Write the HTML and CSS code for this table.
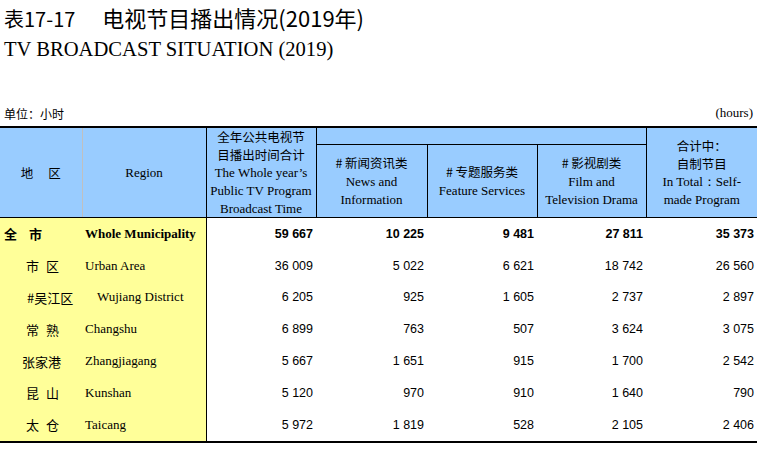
FILE: index.html
```html
<!DOCTYPE html>
<html lang="zh">
<head>
<meta charset="utf-8">
<title>电视节目播出情况</title>
<link rel="stylesheet" href="styles.css">
</head>
<body>
<div class="page">
  <h1 class="title-cn"><span>表17-17</span><span class="title-gap">电视节目播出情况(2019年)</span></h1>
  <h2 class="title-en">TV BROADCAST SITUATION (2019)</h2>
  <div class="unit-row">
    <span class="unit-cn">单位：小时</span>
    <span class="unit-en">(hours)</span>
  </div>
  <table class="stats">
    <colgroup>
      <col class="c1"><col class="c2"><col class="c3"><col class="c4"><col class="c5"><col class="c6"><col class="c7">
    </colgroup>
    <thead>
      <tr class="ha">
        <th rowspan="2" class="h-area"><span class="cn">地</span><span class="cn gap15">区</span></th>
        <th rowspan="2" class="h-region en">Region</th>
        <th rowspan="2" class="h-col"><span class="cn">全年公共电视节<br>目播出时间合计</span><br><span class="en">The Whole year’s<br>Public TV Program<br>Broadcast Time</span></th>
        <th colspan="3" class="h-group"></th>
        <th rowspan="2" class="h-col h-last"><span class="cn">合计中：<br>自制节目</span><br><span class="en">In Total：Self-<br>made Program</span></th>
      </tr>
      <tr class="hb">
        <th class="h-col"><span class="cn"># 新闻资讯类</span><br><span class="en">News and<br>Information</span></th>
        <th class="h-col"><span class="cn"># 专题服务类</span><br><span class="en">Feature Services</span></th>
        <th class="h-col"><span class="cn"># 影视剧类</span><br><span class="en">Film and<br>Television Drama</span></th>
      </tr>
    </thead>
    <tbody>
      <tr class="total">
        <td class="name-cn bold"><span class="sp12">全</span>市</td>
        <td class="name-en bold">Whole Municipality</td>
        <td class="num">59 667</td><td class="num">10 225</td><td class="num">9 481</td><td class="num">27 811</td><td class="num">35 373</td>
      </tr>
      <tr>
        <td class="name-cn"><span class="ind26"><span class="sp7">市</span>区</span></td>
        <td class="name-en">Urban Area</td>
        <td class="num">36 009</td><td class="num">5 022</td><td class="num">6 621</td><td class="num">18 742</td><td class="num">26 560</td>
      </tr>
      <tr>
        <td class="name-cn"><span class="ind27">#吴江区</span></td>
        <td class="name-en"><span class="ind12">Wujiang District</span></td>
        <td class="num">6 205</td><td class="num">925</td><td class="num">1 605</td><td class="num">2 737</td><td class="num">2 897</td>
      </tr>
      <tr>
        <td class="name-cn"><span class="ind26"><span class="sp7">常</span>熟</span></td>
        <td class="name-en">Changshu</td>
        <td class="num">6 899</td><td class="num">763</td><td class="num">507</td><td class="num">3 624</td><td class="num">3 075</td>
      </tr>
      <tr>
        <td class="name-cn"><span class="ind22">张家港</span></td>
        <td class="name-en">Zhangjiagang</td>
        <td class="num">5 667</td><td class="num">1 651</td><td class="num">915</td><td class="num">1 700</td><td class="num">2 542</td>
      </tr>
      <tr>
        <td class="name-cn"><span class="ind26"><span class="sp7">昆</span>山</span></td>
        <td class="name-en">Kunshan</td>
        <td class="num">5 120</td><td class="num">970</td><td class="num">910</td><td class="num">1 640</td><td class="num">790</td>
      </tr>
      <tr>
        <td class="name-cn"><span class="ind26"><span class="sp7">太</span>仓</span></td>
        <td class="name-en">Taicang</td>
        <td class="num">5 972</td><td class="num">1 819</td><td class="num">528</td><td class="num">2 105</td><td class="num">2 406</td>
      </tr>
    </tbody>
  </table>
</div>
</body>
</html>
```

FILE: styles.css
```css
html, body {
  margin: 0;
  padding: 0;
  background: #ffffff;
  color: #000000;
}

.page {
  width: 757px;
}

.title-cn {
  margin: 0;
  padding: 5px 0 0 4px;
  font-family: "Noto Sans CJK SC", sans-serif;
  font-size: 20px;
  font-weight: normal;
  line-height: 25px;
  white-space: nowrap;
}

.title-gap {
  margin-left: 27px;
  font-size: 22px;
}

.title-en {
  margin: 0;
  padding: 3px 0 0 4px;
  font-family: "Liberation Serif", serif;
  font-size: 20.6px;
  font-weight: normal;
  line-height: 30px;
}

.unit-row {
  display: flex;
  justify-content: space-between;
  align-items: center;
  padding: 0 4px;
  margin-top: 40px;
  height: 18px;
}

.unit-cn {
  font-family: "Noto Sans CJK SC", sans-serif;
  font-size: 12px;
}

.unit-en {
  font-family: "Liberation Serif", serif;
  font-size: 13px;
}

.stats {
  margin-top: 4px;
  width: 757px;
  table-layout: fixed;
  border-collapse: collapse;
  border-top: 2px solid #000;
  border-bottom: 2px solid #000;
}

.c1 { width: 82px; }
.c2 { width: 124px; }
.c3 { width: 110px; }
.c4 { width: 111px; }
.c5 { width: 110px; }
.c6 { width: 109px; }
.c7 { width: 111px; }

.stats th {
  background: #99ccff;
  font-weight: normal;
  padding: 0;
  text-align: center;
  vertical-align: middle;
  line-height: 17px;
}

.ha { height: 17px; }
.hb { height: 71px; }

.cn {
  font-family: "Noto Sans CJK SC", sans-serif;
  font-size: 12.5px;
}

.stats th .cn {
  display: inline-block;
  line-height: 17.5px;
}

.en {
  font-family: "Liberation Serif", serif;
  font-size: 13px;
}

.h-area {
  border-right: 1px solid #c0c0c0;
}

.gap15 {
  margin-left: 15px;
}

.h-region {
  border-right: 1px solid #000;
}

.h-col {
  border-right: 1px solid #000;
}

.h-last {
  border-right: none;
}

.h-group {
  border-right: 1px solid #000;
  border-bottom: 1px solid #000;
}

thead tr.hb th,
thead .h-area,
thead .h-region,
thead .h-col {
  border-bottom: 1px solid #000;
}

.stats td {
  padding: 0;
  height: 31.8px;
  vertical-align: middle;
  white-space: nowrap;
}

.name-cn {
  background: #ffff99;
  font-family: "Noto Sans CJK SC", sans-serif;
  font-size: 13px;
  padding-left: 4px !important;
}

.name-en {
  background: #ffff99;
  font-family: "Liberation Serif", serif;
  font-size: 13px;
  padding-left: 3px !important;
  border-right: 1px solid #000;
}

.bold {
  font-weight: bold;
}

.sp12 { margin-right: 12px; }
.sp7 { margin-right: 7px; }
.ind26 { margin-left: 22px; }
.ind27 { margin-left: 23px; }
.ind22 { margin-left: 18px; }
.ind12 { margin-left: 12px; }

.num {
  font-family: "Liberation Sans", sans-serif;
  font-size: 12.5px;
  text-align: right;
  padding-right: 3px !important;
}

.total .num {
  font-weight: bold;
}
```
